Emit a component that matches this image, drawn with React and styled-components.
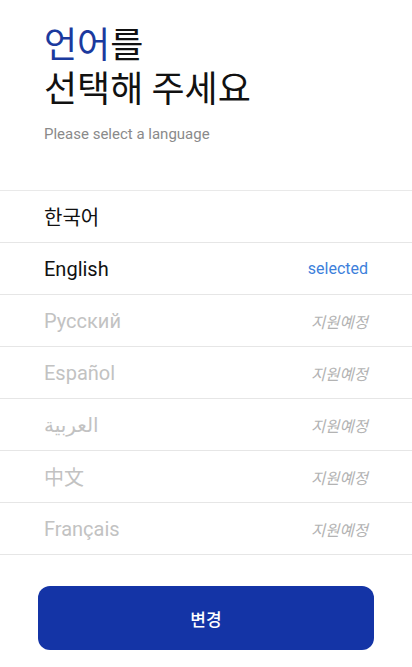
import React, { useState } from 'react'
import styled, { createGlobalStyle } from 'styled-components'

const languages = [
  { id: 'ko', label: '한국어', available: true },
  { id: 'en', label: 'English', available: true },
  { id: 'ru', label: 'Русский', available: false },
  { id: 'es', label: 'Español', available: false },
  { id: 'ar', label: 'العربية', available: false },
  { id: 'zh', label: '中文', available: false },
  { id: 'fr', label: 'Français', available: false },
]

const GlobalStyle = createGlobalStyle`
  html, body {
    margin: 0;
    padding: 0;
    background: #ffffff;
  }
  body {
    font-family: Roboto, "Noto Sans CJK KR", "Noto Sans", sans-serif;
  }
`

const App = () => {
  const [selected, setSelected] = useState('en')

  return (
    <Wrapper>
      <GlobalStyle />
      <Header>
        <Title>
          <span>언어</span>를
          <br />
          선택해 주세요
        </Title>
        <Subtitle>Please select a language</Subtitle>
      </Header>

      {/* language list */}
      <List>
        {languages.map((item) => (
          <Row
            key={item.id}
            onClick={() => item.available && setSelected(item.id)}
          >
            <Label $disabled={!item.available}>{item.label}</Label>
            {item.available
              ? selected === item.id && <Selected>selected</Selected>
              : <Soon>지원예정</Soon>}
          </Row>
        ))}
      </List>

      <Footer>
        <Button type='button'>변경</Button>
      </Footer>
    </Wrapper>
  )
}

const Wrapper = styled.main`
  width: 412px;
  min-height: 667px;
  background: #ffffff;
`

const Header = styled.header`
  padding: 20px 44px 0;
`

const Title = styled.h1`
  margin: 0;
  font-family: "Noto Sans CJK KR", Roboto, sans-serif;
  font-size: 36px;
  font-weight: 400;
  line-height: 44px;
  color: #111111;
  span {
    color: #1b3a9e;
  }
`

const Subtitle = styled.p`
  margin: 16px 0 0;
  font-size: 15px;
  line-height: 20px;
  color: #8a8a8a;
`

const List = styled.ul`
  list-style: none;
  margin: 46px 0 0;
  padding: 0;
  border-top: 1px solid #e9e9e9;
`

const Row = styled.li`
  display: flex;
  align-items: center;
  justify-content: space-between;
  height: 51px;
  padding: 0 44px;
  border-bottom: 1px solid #e6e6e6;
`

const Label = styled.span`
  font-family: Roboto, "Noto Sans CJK KR", "DejaVu Sans", sans-serif;
  font-size: 20px;
  color: ${(props) => (props.$disabled ? '#c2c2c2' : '#111111')};
`

const Selected = styled.span`
  font-size: 16px;
  color: #3d7fdb;
`

const Soon = styled.span`
  font-family: "Noto Sans CJK KR", sans-serif;
  font-size: 15.5px;
  font-style: italic;
  color: #b3b3b3;
`

const Footer = styled.div`
  padding: 31px 38px 0;
`

const Button = styled.button`
  display: block;
  width: 100%;
  height: 64px;
  border: none;
  border-radius: 12px;
  background: #1434a6;
  color: #ffffff;
  font-family: "Noto Sans CJK KR", sans-serif;
  font-size: 17px;
  font-weight: 500;
  cursor: pointer;
`

export default App
